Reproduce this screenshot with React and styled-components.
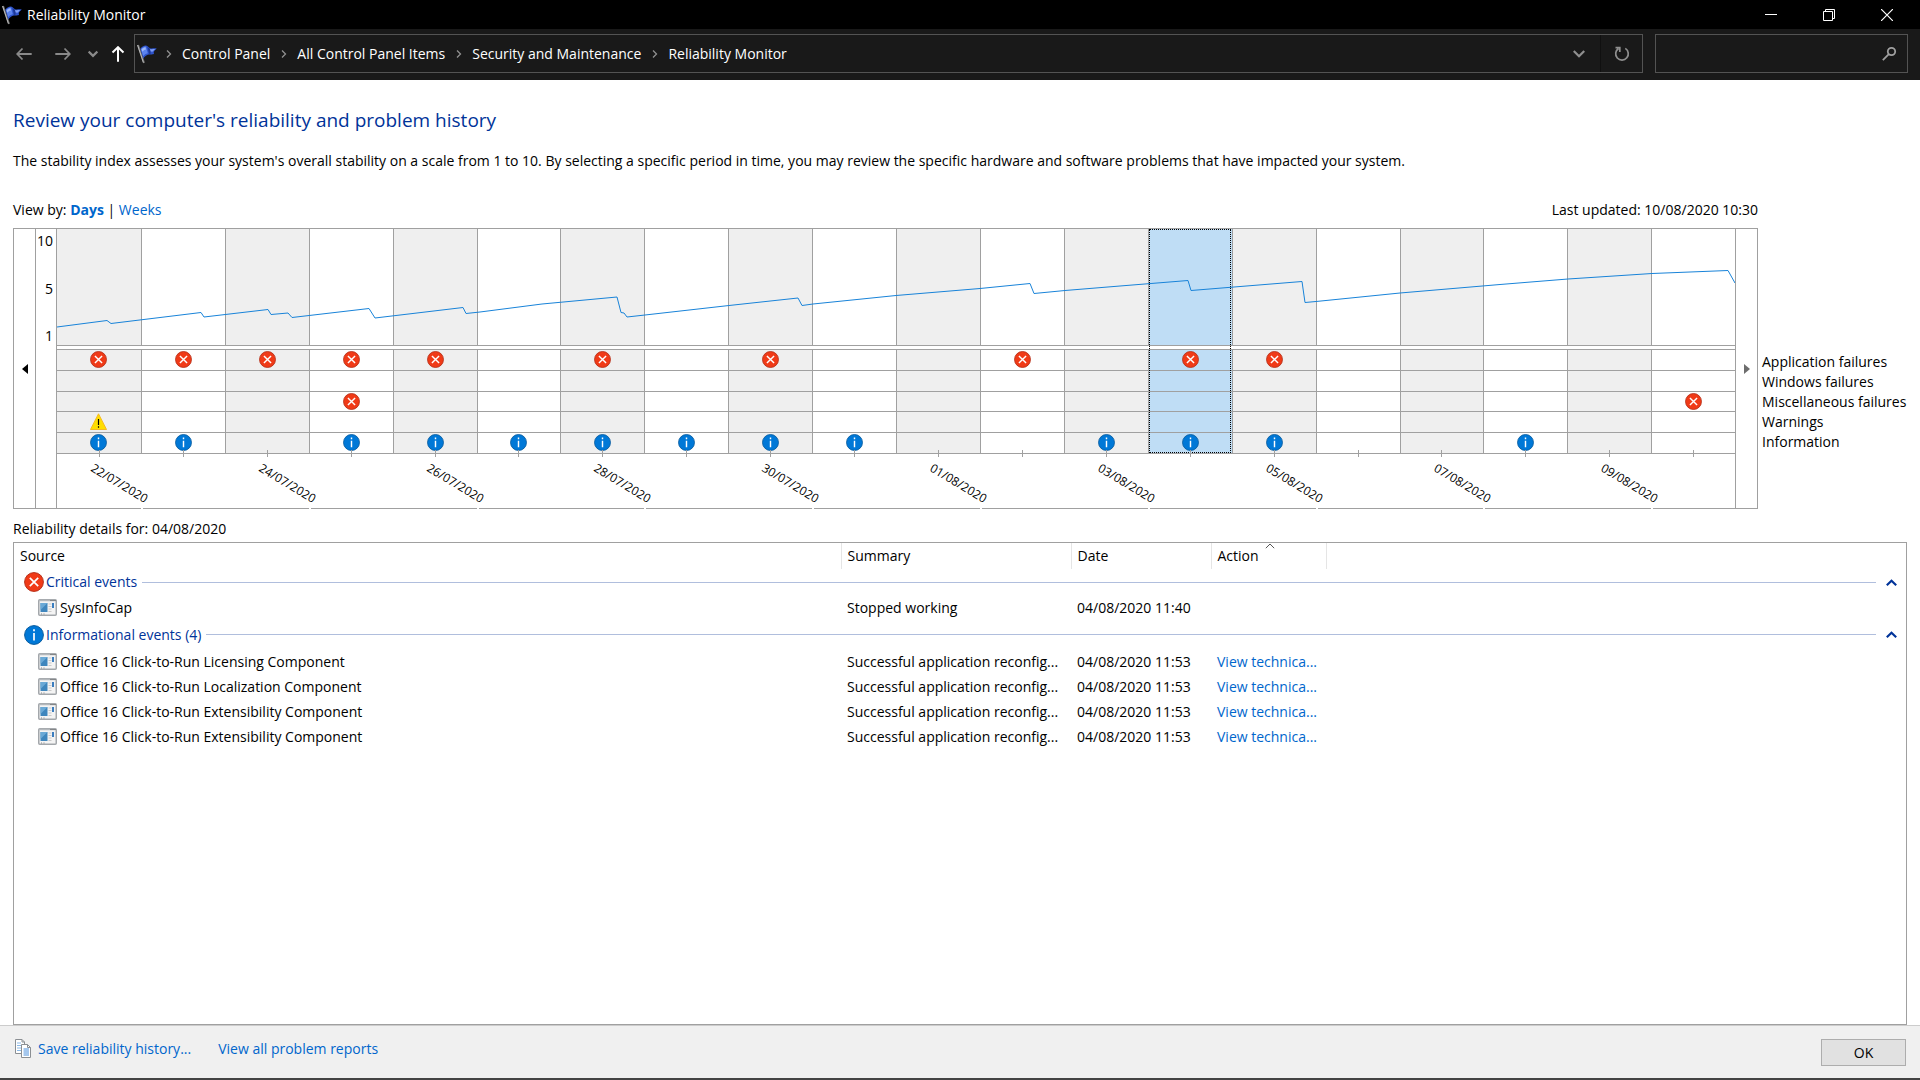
import React, { useState } from "react";
import styled, { createGlobalStyle } from "styled-components";

const Global = createGlobalStyle`
  *, *::before, *::after { box-sizing: border-box; }
  body {
    margin: 0;
    background: #fff;
    color: #000;
    font: 14px/20px "Open Sans", "Noto Sans", sans-serif;
  }
  button {
    margin: 0;
    padding: 0;
    border: 0;
    background: none;
    color: inherit;
    font: inherit;
  }
`;

const Window = styled.div`
  display: flex;
  flex-direction: column;
  min-height: 100vh;
`;

const TitleBar = styled.header`
  display: flex;
  align-items: center;
  height: 29px;
  padding: 0 4px 0 2px;
  background: #000;
  color: #fff;
`;

const WindowTitle = styled.div`
  flex: 1;
  margin-left: 5px;
`;

const CaptionButton = styled.button`
  display: grid;
  place-items: center;
  width: 58px;
  height: 28px;
`;

const NavBar = styled.nav`
  display: flex;
  align-items: flex-start;
  height: 51px;
  padding: 5px 12px 0 8px;
  background: #191919;
  color: #fff;
`;

const NavButtons = styled.div`
  display: flex;
  align-items: center;
  height: 39px;
  width: 126px;
`;

const NavButton = styled.button`
  flex: none;
  display: grid;
  place-items: center;
  width: ${(p) => p.$width}px;
  height: 39px;
  padding-left: ${(p) => (p.$active ? 3 : 0)}px;
  color: ${(p) => (p.$active ? "#fff" : "#8a8a8a")};
`;

const AddressBar = styled.div`
  flex: 1;
  display: flex;
  align-items: center;
  height: 39px;
  padding-left: 2px;
  border: 1px solid #535353;
`;

const Crumbs = styled.ol`
  flex: 1;
  display: flex;
  align-items: center;
  margin: 0;
  padding: 0;
  list-style: none;
`;

const Crumb = styled.li`
  display: flex;
  align-items: center;
  svg { margin: 0 9px 0 8px; color: #909090; }
  & + & svg { margin: 0 9px 0 10px; }
`;

const CrumbLink = styled.a`
  color: #fff;
  text-decoration: none;
`;

const BarButton = styled.button`
  display: grid;
  place-items: center;
  width: 42px;
  height: 37px;
  color: #8f8f8f;
  border-left: ${(p) => (p.$divided ? "1px solid #101010" : "0")};
`;

const SearchBox = styled.label`
  display: flex;
  align-items: center;
  width: 253px;
  height: 39px;
  margin-left: 12px;
  padding-right: 10px;
  border: 1px solid #535353;
  color: #a0a0a0;
`;

const SearchInput = styled.input`
  flex: 1;
  min-width: 0;
  height: 35px;
  padding: 0 8px;
  border: 0;
  outline: 0;
  background: transparent;
  color: #fff;
  font: inherit;
`;

const Content = styled.main`
  flex: 1;
  display: flex;
  flex-direction: column;
  padding: 27px 13px 0;
`;

const Heading = styled.h1`
  margin: 0;
  color: #003399;
  font-size: 19px;
  font-weight: 400;
  line-height: 26px;
`;

const Intro = styled.p`
  margin: 18px 0 29px;
`;

const ChartLayout = styled.section`
  display: grid;
  grid-template-columns: minmax(0, 1fr) 149px;
`;

const ViewRow = styled.div`
  display: flex;
  justify-content: space-between;
  padding-bottom: 8px;
`;

const TextLink = styled.a`
  color: #0066cc;
  font-weight: ${(p) => (p.$current ? 700 : 400)};
  text-decoration: none;
`;

const Chart = styled.div`
  display: flex;
  grid-column: 1;
  height: 281px;
  border: 1px solid #a0a0a0;
`;

const Pager = styled.button`
  display: grid;
  place-items: center;
  width: 21px;
  color: ${(p) => (p.$muted ? "#6d6d6d" : "#000")};
`;

const Scale = styled.div`
  display: flex;
  flex-direction: column;
  justify-content: space-between;
  width: 21px;
  padding: 2px 3px 162px 0;
  border-left: 1px solid #a0a0a0;
  text-align: right;
`;

const Days = styled.div`
  position: relative;
  flex: 1;
  display: flex;
  min-width: 0;
  border: solid #a0a0a0;
  border-width: 0 1px;
`;

const Day = styled.div`
  position: relative;
  flex: 1;
  min-width: 0;
  &:nth-child(odd)::after {
    content: "";
    position: absolute;
    top: 279px;
    right: -2px;
    width: 2px;
    height: 1px;
    background: #fff;
  }
`;

const DayButton = styled.button`
  display: block;
  width: 100%;
  &::after {
    content: "";
    position: absolute;
    inset: 0 1px auto 1px;
    height: 224px;
    border: 1px dotted ${(p) => (p.$selected ? "#000" : "transparent")};
  }
`;

const fill = (p) => (p.$selected ? "#bfddf5" : p.$shaded ? "#efefef" : "#fff");

const Plot = styled.div`
  height: 117px;
  border: solid #a0a0a0;
  border-width: 0 0 1px ${(p) => (p.$first ? 0 : 1)}px;
  background: ${fill};
`;

const Marks = styled.div`
  display: grid;
  grid-template-rows: repeat(5, 1fr);
  height: 105px;
  margin-top: 3px;
  border: solid #a0a0a0;
  border-width: 0 0 1px ${(p) => (p.$first ? 0 : 1)}px;
  background: ${fill};
`;

const Mark = styled.span`
  display: grid;
  place-items: start center;
  padding-top: 1px;
  border-top: 1px solid #a0a0a0;
`;

const Tick = styled.div`
  position: absolute;
  top: 221px;
  left: 50%;
  width: 1px;
  height: 7px;
  background: #a0a0a0;
`;

const DateLabel = styled.time`
  position: absolute;
  top: 230px;
  left: 35px;
  font-size: 12px;
  line-height: 16px;
  transform: rotate(31deg);
  transform-origin: 0 50%;
  white-space: nowrap;
`;

const StabilityLine = styled.svg`
  position: absolute;
  top: 0;
  left: 0;
  width: 100%;
  height: 116px;
  pointer-events: none;
`;

const Legend = styled.ul`
  align-self: start;
  margin: 124px 0 0;
  padding: 0 0 0 4px;
  list-style: none;
  white-space: nowrap;
`;

const DetailsTitle = styled.h2`
  margin: 10px 0 3px;
  font-size: 14px;
  font-weight: 400;
  line-height: 20px;
`;

const DetailsBox = styled.section`
  flex: 1;
  border: 1px solid #a0a0a0;
`;

const Table = styled.table`
  width: 100%;
  table-layout: fixed;
  border-collapse: collapse;
`;

const Column = styled.col`
  width: ${(p) => p.$width};
`;

const HeadCell = styled.th`
  position: relative;
  height: 26px;
  padding: 0 6px;
  border-right: ${(p) => (p.$last ? "0" : "1px solid #e5e5e5")};
  font-weight: 400;
  text-align: left;
`;

const SortMark = styled.svg`
  position: absolute;
  top: 0;
  left: 53px;
`;

const GroupCell = styled.th`
  height: ${(p) => p.$height}px;
  padding: 0 8px 0 10px;
  color: #003399;
  font-weight: 400;
  text-align: left;
`;

const GroupLine = styled.div`
  display: flex;
  align-items: center;
  gap: 2px;
`;

const Rule = styled.div`
  flex: 1;
  height: 1px;
  margin: 0 7px 0 3px;
  background: #b0bedd;
`;

const Toggle = styled.button`
  display: grid;
  place-items: center;
  width: 13px;
  height: 20px;
`;

const Cell = styled.td`
  height: 25px;
  padding: 0 0 0 6px;
  white-space: nowrap;
`;

const SourceName = styled.div`
  display: flex;
  align-items: center;
  gap: 3px;
  padding-left: 18px;
`;

const Footer = styled.footer`
  display: flex;
  align-items: flex-start;
  height: 55px;
  padding: 13px 14px 0;
  border-top: 1px solid #ccc;
  border-bottom: 2px solid #444;
  background: #f0f0f0;
`;

const FooterLinks = styled.div`
  flex: 1;
  display: flex;
  gap: 27px;
`;

const FooterLink = styled(TextLink)`
  display: flex;
  align-items: center;
  gap: 7px;
`;

const OkButton = styled.button`
  width: 85px;
  height: 27px;
  border: 1px solid #adadad;
  background: #e1e1e1;
`;

const FlagIcon = () => (
  <svg width="20" height="20" viewBox="0 0 20 20" aria-hidden="true">
    <path d="M1 1 7 19" stroke="#6f6f6f" strokeWidth="2" />
    <path d="M.6 1 6.400 18.500" stroke="#d0d0d0" strokeWidth=".8" />
    <path d="M3.300 4.800C4.500 3 6.500 1.600 9 1.500c1.800.2 2.600 2 4 2.700 2 .6 4-.3 6.700.3-1.200 1.300-2.500 2.300-3 3.500l.3 2c-1.800.8-3.800.2-5.300.5-2.200.6-4 2-5.400 4Z" fill="#2f54cc" />
    <path d="M4 5c1.500-1.700 3-2.600 5-2.600l1.800 6.800c-2 .4-3.500 1.500-4.600 3Z" fill="#5b83ee" />
    <path d="M4.600 5.300C5.800 4 7 3.400 8.400 3.200l.6 2.400c-1.500.2-2.700 1-3.700 2.200Z" fill="#9db8fa" />
    <path d="M13 5c2 .6 3.600 0 5.300.1-1 .9-1.900 1.700-2.400 2.500-1 .3-1.800 0-2.500-.3Z" fill="#7f9ef5" />
    <path d="m10.500 3 1.500 7 1.800-.4-.9-4.800Z" fill="#1c3796" />
  </svg>
);

const Chevron = ({ size = 8, turn = 0, weight = 1.6 }) => (
  <svg width={size} height={size} viewBox="0 0 8 8" fill="none" stroke="currentColor" strokeWidth={weight} aria-hidden="true">
    <path d="M2 .5 5.500 4 2 7.500" transform={`rotate(${turn} 4 4)`} />
  </svg>
);

const Arrow = ({ turn = 0, weight = 1.8 }) => (
  <svg width="16" height="16" viewBox="0 0 16 16" fill="none" stroke="currentColor" strokeWidth={weight} aria-hidden="true">
    <path d="M1 8h14.700M6.500 2.500 1.200 8l5.300 5.500" transform={`rotate(${turn} 8 8)`} />
  </svg>
);

const ErrorIcon = ({ size = 17 }) => (
  <svg width={size} height={size} viewBox="0 0 20 20" role="img" aria-label="Failure">
    <circle cx="10" cy="10" r="9.400" fill="#f03a17" stroke="#b5301a" strokeWidth="1" />
    <path d="m5.800 5.800 8.400 8.400m0-8.400-8.400 8.400" stroke="#fff" strokeWidth="1.700" />
  </svg>
);

const InfoIcon = ({ size = 17 }) => (
  <svg width={size} height={size} viewBox="0 0 20 20" role="img" aria-label="Information">
    <circle cx="10" cy="10" r="9.400" fill="#0078d7" stroke="#0a5c9e" strokeWidth="1" />
    <path d="M10 8v7.500M10 4.200v2" stroke="#fff" strokeWidth="1.700" />
  </svg>
);

const WarningIcon = () => (
  <svg width="17" height="17" viewBox="0 0 17 17" role="img" aria-label="Warning">
    <path d="M8.500.8 16.500 16.500H.5Z" fill="#ffde00" stroke="#f5b921" />
    <path d="M8.500 6v6M8.500 13.200v1.600" stroke="#000" strokeWidth="1.200" />
  </svg>
);

const ProgramIcon = () => (
  <svg width="19" height="17" viewBox="0 0 19 17" aria-hidden="true">
    <rect x=".75" y=".75" width="17.500" height="15.500" rx="1" fill="#f4f4f4" stroke="#a3a7ab" strokeWidth="1.500" />
    <path d="M1 1.500h17" stroke="#b4b8bc" strokeWidth="1.500" />
    <path d="M12.500 1.500h1m1 0h1m1 0h1" stroke="#555" />
    <rect x="2.500" y="4" width="7" height="9" fill="#3f86bd" />
    <path d="M2.500 4h7L2.500 11Z" fill="#6aa9d6" />
    <path d="M10.500 5h3m-3 2.500h3m-3 2.500h3m-3 2.500h3" stroke="#c9c9c9" />
    <rect x="14" y="4" width="2" height="5" fill="#3b7ec0" />
    <path d="M3 15h1m1.500 0h1" stroke="#888" />
  </svg>
);

const CopyIcon = () => (
  <svg width="17" height="20" viewBox="-1 0 17 20" fill="#fff" stroke="#8b8f93" aria-hidden="true">
    <path d="M.5.5H7L9.500 3v11.500H.5Z" />
    <path d="M7 .5V3h2.500" fill="none" />
    <path d="M2 4h4M2 6.500h4M2 9h4M2 11.500h4" stroke="#8ab9e8" />
    <path d="M6.500 5.500h6l3 3v10h-9Z" />
    <path d="M12.500 5.500v3h3" fill="none" />
    <path d="M8.500 10h5.500M8.500 12h5.500M8.500 14h5.500M8.500 16h5.500" stroke="#4a8fdc" />
  </svg>
);

const DATES = [
  "22/07/2020", "23/07/2020", "24/07/2020", "25/07/2020", "26/07/2020",
  "27/07/2020", "28/07/2020", "29/07/2020", "30/07/2020", "31/07/2020",
  "01/08/2020", "02/08/2020", "03/08/2020", "04/08/2020", "05/08/2020",
  "06/08/2020", "07/08/2020", "08/08/2020", "09/08/2020", "10/08/2020",
];

const CATEGORIES = [
  { name: "Application failures", icon: ErrorIcon, days: [0, 1, 2, 3, 4, 6, 8, 11, 13, 14] },
  { name: "Windows failures", icon: ErrorIcon, days: [] },
  { name: "Miscellaneous failures", icon: ErrorIcon, days: [3, 19] },
  { name: "Warnings", icon: WarningIcon, days: [0] },
  { name: "Information", icon: InfoIcon, days: [0, 1, 3, 4, 5, 6, 7, 8, 9, 12, 13, 14, 17] },
];

const LINE =
  "0,98 50,91.500 54,94.500 144,83.500 147,88 211,80.500 214,85.500 231,84 235,88.500 312,79.500 318,89 406,78.500 409,84.500 " +
  "423,83 485,75 560,68 564,83.500 567,84 570,88 588,86 672,76.500 741,69 745,76.500 756,75 839,66.500 923,59.500 973,54.500 " +
  "977,64.500 1008,61.500 1063,57 1131,51.500 1134,61.500 1245,52.500 1248,73.500 1259,72.500 1343,64 1443,55.500 1511,50 1595,44.500 1671,41.500 1678,54";

const GROUPS = [
  {
    title: "Critical events",
    icon: ErrorIcon,
    height: 26,
    rows: [["SysInfoCap", "Stopped working", "04/08/2020 11:40", ""]],
  },
  {
    title: "Informational events (4)",
    icon: InfoIcon,
    height: 29,
    rows: ["Licensing", "Localization", "Extensibility", "Extensibility"].map((part) => [
      `Office 16 Click-to-Run ${part} Component`,
      "Successful application reconfig...",
      "04/08/2020 11:53",
      "View technica...",
    ]),
  },
];

function DayColumn({ index, date, selected, onSelect }) {
  const look = { $shaded: index % 2 === 0, $selected: selected, $first: index === 0 };
  return (
    <Day>
      <DayButton type="button" aria-label={date} aria-pressed={selected} $selected={selected} onClick={onSelect}>
        <Plot {...look} />
        <Marks {...look}>
          {CATEGORIES.map(({ name, icon: Icon, days }) => (
            <Mark key={name}>{days.includes(index) && <Icon />}</Mark>
          ))}
        </Marks>
      </DayButton>
      <Tick />
      {index % 2 === 0 && <DateLabel>{date}</DateLabel>}
    </Day>
  );
}

export default function App() {
  const [selected, setSelected] = useState(13);
  const crumbs = ["Control Panel", "All Control Panel Items", "Security and Maintenance", "Reliability Monitor"];

  return (
    <Window>
      <Global />
      <TitleBar>
        <FlagIcon />
        <WindowTitle>Reliability Monitor</WindowTitle>
        <CaptionButton type="button" aria-label="Minimize">
          <svg width="12" height="12" viewBox="0 0 12 12" stroke="#fff"><path d="M0 5.500h12" /></svg>
        </CaptionButton>
        <CaptionButton type="button" aria-label="Restore">
          <svg width="12" height="12" viewBox="0 0 12 12" fill="none" stroke="#fff"><path d="M.5 2.500h9v9h-9ZM2.500 2.500v-2h9v9h-2" /></svg>
        </CaptionButton>
        <CaptionButton type="button" aria-label="Close">
          <svg width="12" height="12" viewBox="0 0 12 12" stroke="#fff" strokeWidth="1.200"><path d="m0 0 12 12M12 0 0 12" /></svg>
        </CaptionButton>
      </TitleBar>

      <NavBar>
        <NavButtons>
          <NavButton type="button" aria-label="Back" $width={31}><Arrow /></NavButton>
          <NavButton type="button" aria-label="Forward" $width={47}><Arrow turn={180} /></NavButton>
          <NavButton type="button" aria-label="Recent locations" $width={13}><Chevron size={10} turn={90} weight={1.8} /></NavButton>
          <NavButton type="button" aria-label="Up" $width={35} $active><Arrow turn={90} weight={2} /></NavButton>
        </NavButtons>
        <AddressBar>
          <FlagIcon />
          <Crumbs>
            {crumbs.map((crumb) => (
              <Crumb key={crumb}>
                <Chevron size={8} weight={1.300} />
                <CrumbLink href="#">{crumb}</CrumbLink>
              </Crumb>
            ))}
          </Crumbs>
          <BarButton type="button" aria-label="Previous locations"><Chevron size={12} turn={90} weight={1.500} /></BarButton>
          <BarButton type="button" aria-label="Refresh" $divided>
            <svg width="16" height="16" viewBox="0 0 16 16" fill="none" stroke="currentColor" strokeWidth="1.700">
              <path d="M11.300 2.400A6.300 6.300 0 1 1 4.500 2.500M1.500 1.700h4.300V6" />
            </svg>
          </BarButton>
        </AddressBar>
        <SearchBox>
          <SearchInput type="text" aria-label="Search Control Panel" />
          <svg width="16" height="16" viewBox="0 0 16 16" fill="none" stroke="currentColor" strokeWidth="1.800">
            <circle cx="10.500" cy="5.500" r="3.700" /><path d="m7.800 8.200-6 6" />
          </svg>
        </SearchBox>
      </NavBar>

      <Content>
        <Heading>Review your computer's reliability and problem history</Heading>
        <Intro>
          The stability index assesses your system's overall stability on a scale from 1 to 10. By selecting a specific
          period in time, you may review the specific hardware and software problems that have impacted your system.
        </Intro>

        <ChartLayout>
          <div>
            <ViewRow>
              <div>
                View by: <TextLink href="#" $current>Days</TextLink> | <TextLink href="#">Weeks</TextLink>
              </div>
              <div>Last updated: 10/08/2020 10:30</div>
            </ViewRow>
          </div>
          <Chart>
            <Pager type="button" aria-label="Earlier">
              <svg width="6" height="10" viewBox="0 0 6 10" fill="currentColor"><path d="M6 0v10L0 5Z" /></svg>
            </Pager>
            <Scale>
              <span>10</span>
              <span>5</span>
              <span>1</span>
            </Scale>
            <Days>
              {DATES.map((date, index) => (
                <DayColumn key={date} index={index} date={date} selected={index === selected} onSelect={() => setSelected(index)} />
              ))}
              <StabilityLine viewBox="0 0 1678 116" preserveAspectRatio="none" aria-hidden="true">
                <polyline points={LINE} fill="none" stroke="#1883d9" vectorEffect="non-scaling-stroke" />
              </StabilityLine>
            </Days>
            <Pager type="button" aria-label="Later" $muted>
              <svg width="6" height="10" viewBox="0 0 6 10" fill="currentColor"><path d="M0 0v10l6-5Z" /></svg>
            </Pager>
          </Chart>
          <Legend>
            {CATEGORIES.map(({ name }) => <li key={name}>{name}</li>)}
          </Legend>
        </ChartLayout>

        <DetailsTitle>Reliability details for: {DATES[selected]}</DetailsTitle>
        <DetailsBox>
          <Table>
            <colgroup>
              <Column $width="827px" />
              <Column $width="230px" />
              <Column $width="140px" />
              <Column $width="115px" />
              <Column $width="auto" />
            </colgroup>
            <thead>
              <tr>
                <HeadCell>Source</HeadCell>
                <HeadCell>Summary</HeadCell>
                <HeadCell>Date</HeadCell>
                <HeadCell>
                  Action
                  <SortMark width="10" height="6" viewBox="0 0 10 6" fill="none" stroke="#555"><path d="m.8 5.200 4.200-4.200 4.200 4.200" /></SortMark>
                </HeadCell>
                <HeadCell as="td" $last />
              </tr>
            </thead>
            {GROUPS.map(({ title, icon: Icon, height, rows }) => (
              <tbody key={title}>
                <tr>
                  <GroupCell colSpan={5} $height={height}>
                    <GroupLine>
                      <Icon size={20} />
                      <span>{title}</span>
                      <Rule />
                      <Toggle type="button" aria-label={`Collapse ${title}`}>
                        <svg width="11" height="7" viewBox="0 0 11 7" fill="none" stroke="#003399" strokeWidth="2.200"><path d="m.8 6.200 4.700-4.500 4.700 4.500" /></svg>
                      </Toggle>
                    </GroupLine>
                  </GroupCell>
                </tr>
                {rows.map(([source, summary, date, action], i) => (
                  <tr key={i}>
                    <Cell>
                      <SourceName><ProgramIcon />{source}</SourceName>
                    </Cell>
                    <Cell>{summary}</Cell>
                    <Cell>{date}</Cell>
                    <Cell>{action && <TextLink href="#">{action}</TextLink>}</Cell>
                    <Cell />
                  </tr>
                ))}
              </tbody>
            ))}
          </Table>
        </DetailsBox>
      </Content>

      <Footer>
        <FooterLinks>
          <FooterLink href="#"><CopyIcon />Save reliability history...</FooterLink>
          <FooterLink href="#">View all problem reports</FooterLink>
        </FooterLinks>
        <OkButton type="button">OK</OkButton>
      </Footer>
    </Window>
  );
}
